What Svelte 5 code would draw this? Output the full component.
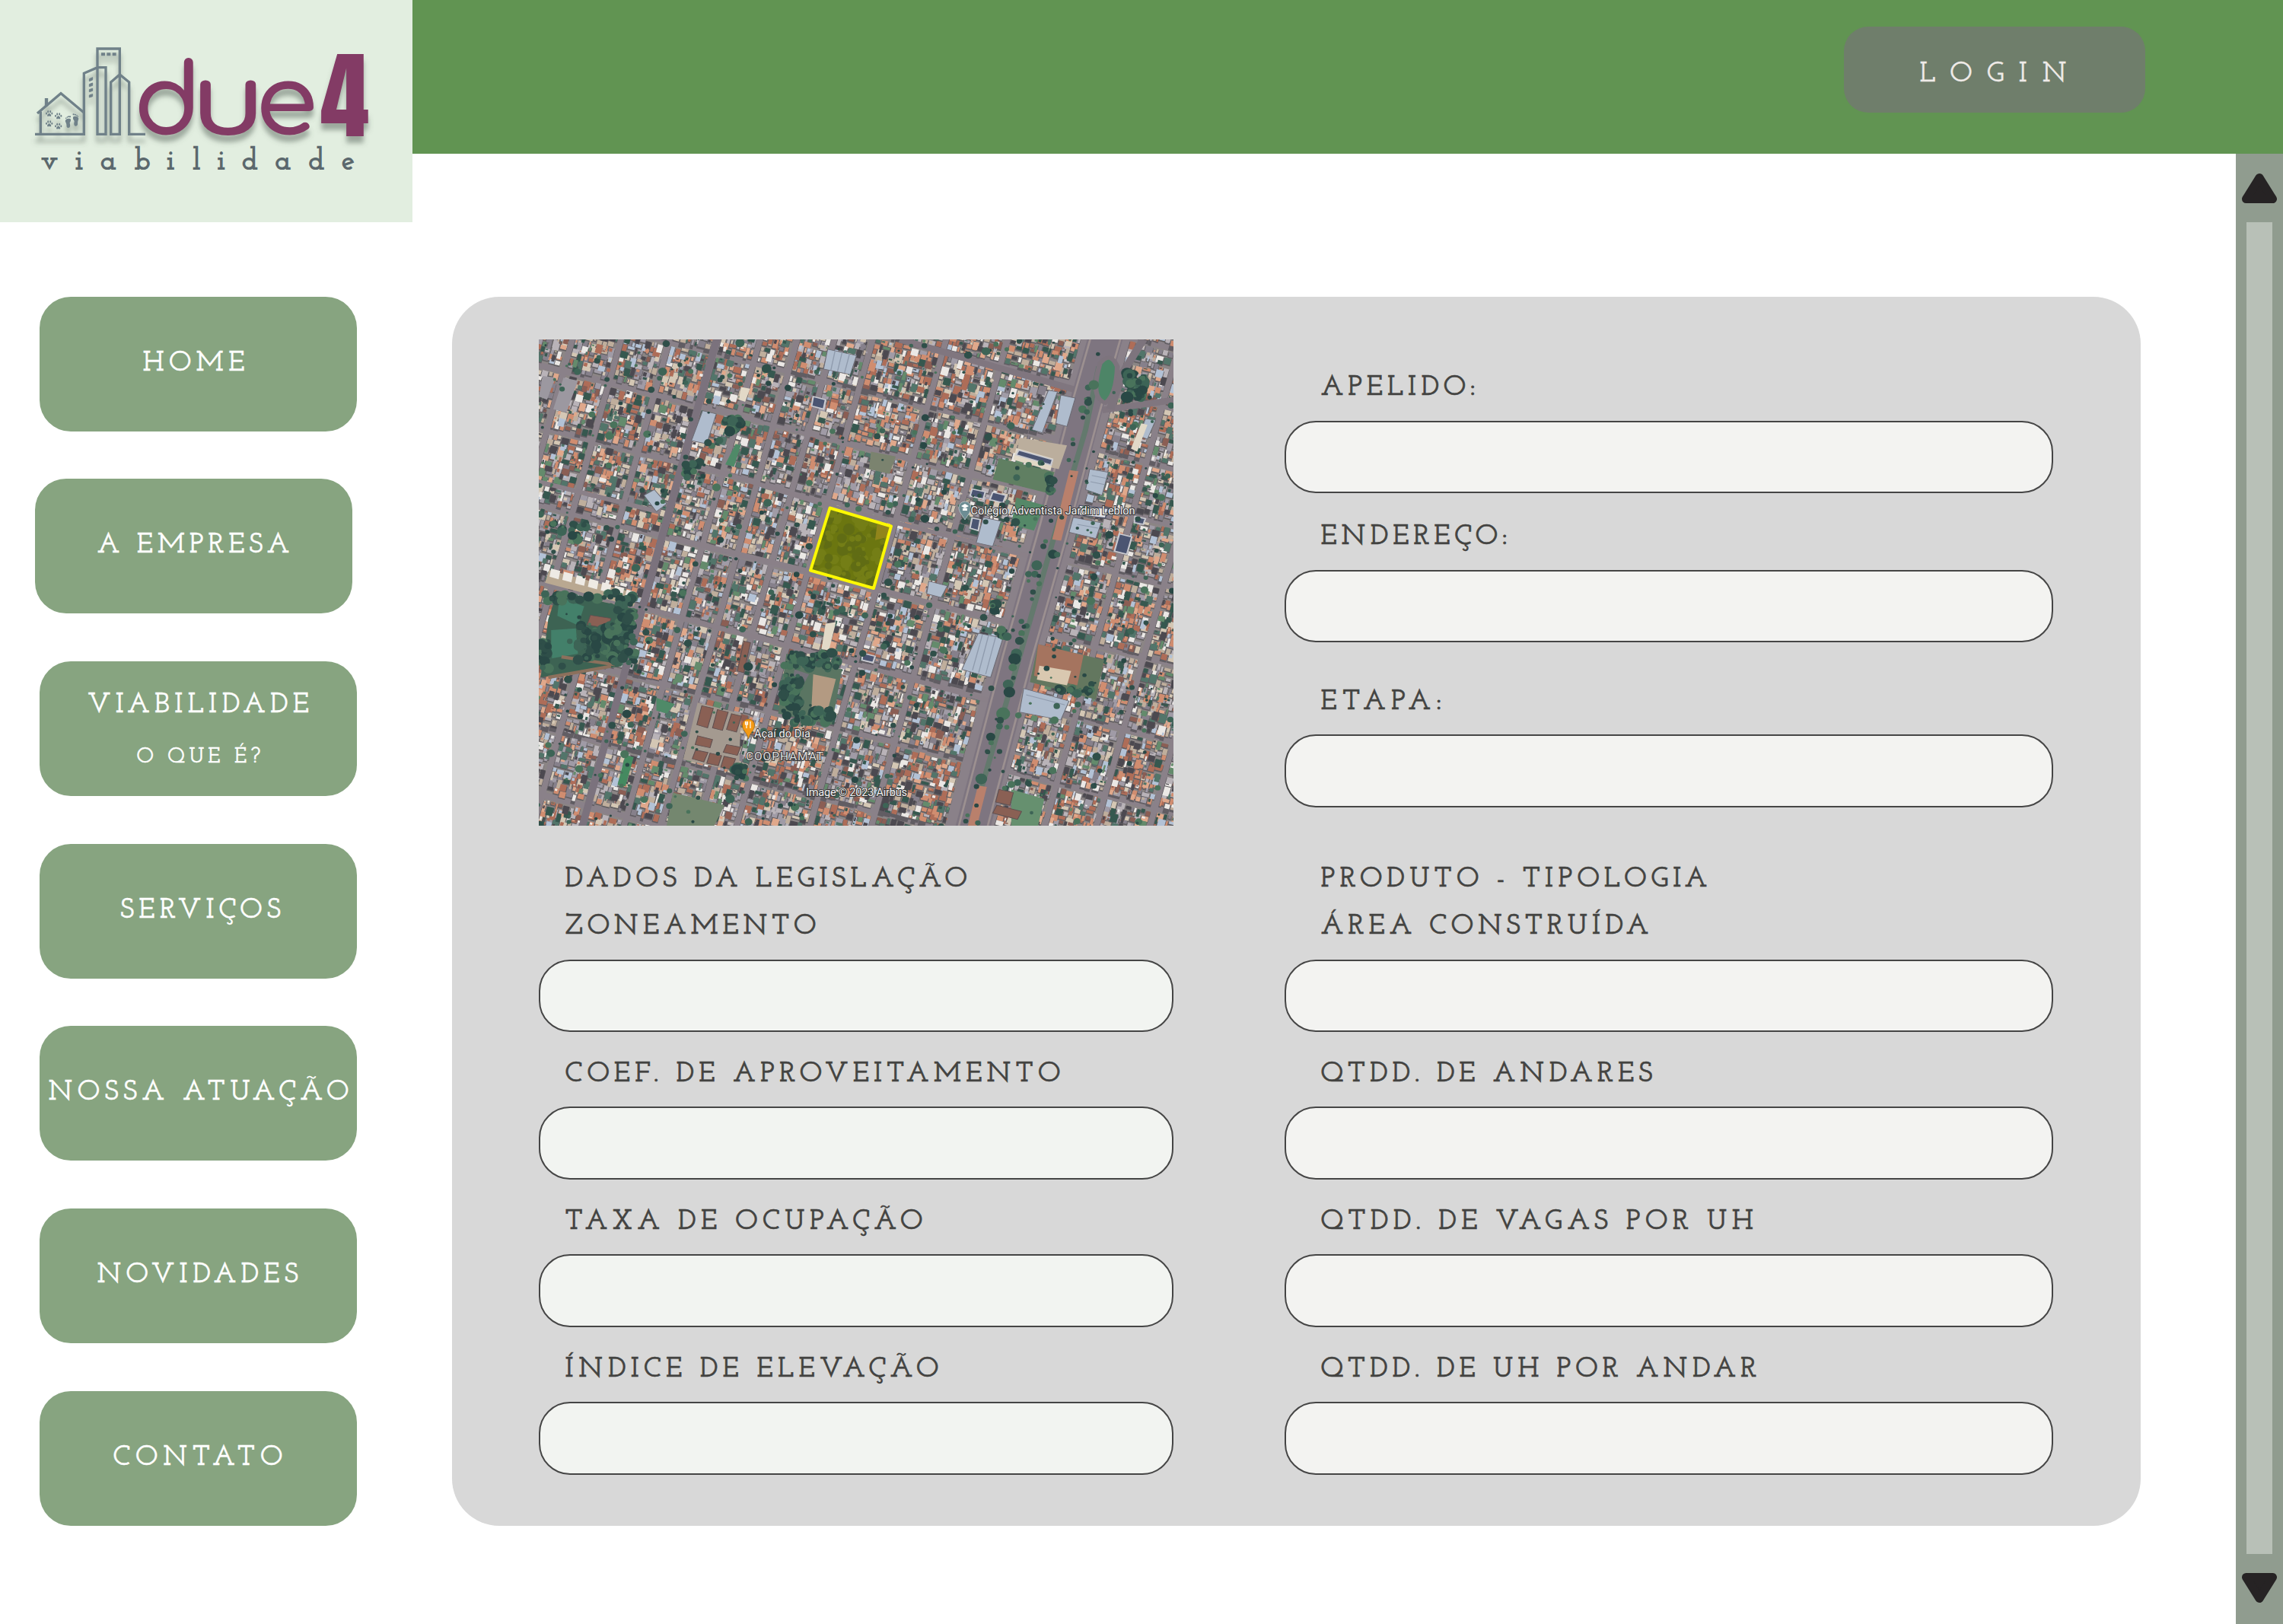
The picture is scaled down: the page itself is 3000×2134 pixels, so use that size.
<script>
  const nav = [
    { label: 'HOME', left: 135.5, width: 134 },
    { label: 'A EMPRESA', left: 81.5, width: 253, shifted: true },
    { label: 'VIABILIDADE', left: 63, width: 291, sub: 'O QUE É?', subLeft: 127.5, subWidth: 162.5 },
    { label: 'SERVIÇOS', left: 106, width: 211 },
    { label: 'NOSSA ATUAÇÃO', left: 11.5, width: 395 },
    { label: 'NOVIDADES', left: 75.5, width: 264.5 },
    { label: 'CONTATO', left: 96.5, width: 223 }
  ];
  const project = [
    { label: 'APELIDO:', width: 203 },
    { label: 'ENDEREÇO:', width: 245 },
    { label: 'ETAPA:', width: 158.5 }
  ];
  const legislation = [
    { label: 'ZONEAMENTO', width: 330 },
    { label: 'COEF. DE APROVEITAMENTO', width: 651 },
    { label: 'TAXA DE OCUPAÇÃO', width: 470 },
    { label: 'ÍNDICE DE ELEVAÇÃO', width: 491 }
  ];
  const product = [
    { label: 'ÁREA CONSTRUÍDA', width: 431 },
    { label: 'QTDD. DE ANDARES', width: 436 },
    { label: 'QTDD. DE VAGAS POR UH', width: 568.5 },
    { label: 'QTDD. DE UH POR ANDAR', width: 573 }
  ];

  // Tracks a label out so that its letters span the given width.
  function track(node, width) {
    const natural = node.getBoundingClientRect().width;
    const gaps = node.textContent.length - 1;
    node.style.letterSpacing = `${(width - natural) / gaps}px`;
  }

  // Seeded generator, so the aerial view is the same on every load.
  let seed = 20234;
  function rnd() {
    seed = (seed + 0x6d2b79f5) | 0;
    let t = Math.imul(seed ^ (seed >>> 15), 1 | seed);
    t = (t + Math.imul(t ^ (t >>> 7), 61 | t)) ^ t;
    return ((t ^ (t >>> 14)) >>> 0) / 4294967296;
  }
  const f = (n) => n.toFixed(1);
  // Street coordinates (s across the avenues, t across the cross streets) to the picture's.
  function at(s, t) {
    const x = (s - 0.214 * t) / 1.0706;
    return [x, t + 0.33 * x];
  }
  function quad(s0, t0, s1, t1) {
    return 'M' + [at(s0, t0), at(s1, t0), at(s1, t1), at(s0, t1)].map((p) => f(p[0]) + ' ' + f(p[1])).join('L') + 'Z';
  }
  const inside = (p) => p[0] > -20 && p[0] < 1590 && p[1] > -20 && p[1] < 1590;

  const avenues = [-20, 100, 218, 336, 453, 555, 645, 735, 828, 1006, 1155, 1340, 1445, 1575, 1700, 1830, 1960];
  const streets = [-560, -470, -280, -90, 90, 285, 531, 775, 1000, 1235, 1450, 1640];
  const roofs = [
    ['#a09ba6', 18], ['#b9b3b8', 15], ['#86808b', 12], ['#bfae9c', 12], ['#d4c7b4', 10],
    ['#ae6d58', 8], ['#d08d70', 9], ['#8b5e54', 5], ['#e0a88b', 5], ['#ebe8e5', 9],
    ['#b3c2d6', 6], ['#52756a', 8], ['#36584f', 8], ['#648b6c', 4], ['#4c4950', 9]
  ];
  const total = roofs.reduce((n, r) => n + r[1], 0);
  const paths = roofs.map(() => '');
  const pick = () => {
    let n = rnd() * total;
    let i = 0;
    while ((n -= roofs[i][1]) > 0) i++;
    return i;
  };
  let blocks = '';
  let shadows = '';
  for (let a = 0; a < avenues.length - 1; a++) {
    if (avenues[a] === 1340) continue;
    for (let b = 0; b < streets.length - 1; b++) {
      const [s0, s1, t0, t1] = [avenues[a] + 8, avenues[a + 1] - 8, streets[b] + 10, streets[b + 1] - 10];
      blocks += quad(s0, t0, s1, t1);
      const warm = rnd();
      for (let t = t0; t < t1 - 8; t += 17) {
        for (let s = s0; s < s1 - 6; ) {
          const w = 5 + rnd() * 15;
          const h = 8 + rnd() * 22;
          const p = at(s, t);
          if (inside(p)) {
            let i = pick();
            if (warm > 0.65 && i < 3 && rnd() < 0.5) i = 5 + Math.floor(rnd() * 2);
            const y = t + rnd() * 9;
            const e = Math.min(s + w, s1);
            shadows += quad(s - 1.5, y + 2, e, y + h + 4);
            paths[i] += quad(s, y, e - 1, Math.min(y + h, t1 + 4));
            if (rnd() < 0.5) paths[pick()] += quad(s + 1, y + 2, s + 2 + w * 0.4, y + h * 0.5);
          }
          s += w + rnd() * 3;
        }
      }
    }
  }
  const trees = [];
  for (let i = 0; i < 650; i++) trees.push([rnd() * 1560, rnd() * 1560, 2.5 + rnd() * rnd() * 10]);
  for (let i = 0; i < 60; i++) {
    const [x, y] = at(1388 + (rnd() - 0.5) * 20, -440 + i * 29 + rnd() * 20);
    if (y > 640 ? rnd() < 0.75 : rnd() < 0.2) trees.push([x, y, 5 + rnd() * rnd() * 16]);
  }
  function grove(x, y, w, h, n, r) {
    for (let i = 0; i < n * 1.8; i++) trees.push([x + rnd() * w, y + rnd() * h, r * (0.3 + rnd() * 0.8)]);
  }
  grove(20, 815, 225, 30, 20, 13);
  grove(110, 920, 120, 110, 46, 13);
  grove(190, 850, 60, 190, 26, 13);
  grove(15, 970, 24, 100, 12, 13);
  grove(606, 1005, 135, 50, 26, 13);
  grove(606, 1070, 46, 120, 24, 13);
  grove(625, 1185, 100, 45, 20, 13);
  grove(1435, 115, 46, 84, 26, 14);
  grove(465, 260, 40, 46, 12, 13);
  grove(485, 1365, 34, 44, 10, 13);
  grove(1180, 400, 80, 20, 2, 9);
  grove(1250, 445, 14, 60, 7, 11);
  grove(1275, 1110, 80, 26, 10, 11);
  grove(365, 400, 40, 60, 10, 11);
  grove(20, 590, 110, 60, 12, 11);
  grove(1112, 842, 18, 36, 7, 12);
  grove(1122, 932, 28, 26, 7, 11);
  const crowns = ['#2f4f49', '#3d6456', '#294845', '#49735b'];

  const canopy = [];
  for (let i = 0; i < 130; i++) {
    canopy.push([680 + rnd() * 185, 555 + rnd() * 240, 4 + rnd() * 11, rnd() < 0.5 ? '#55621c' : '#818a20']);
  }
  const paws = [[74, 297], [110, 307], [74, 337], [110, 347]];
  const letters = '42 177 277 410 538 640 737 835 965 1097 1228'.split(' ').map((n) => 39 + n / 3).join(' ');
</script>

{#snippet field(item, tone)}
  <label class="field {tone}">
    <span class="caption"><span use:track={item.width}>{item.label}</span></span>
    <input type="text" />
  </label>
{/snippet}

<div class="page">
  <aside class="side">
    <div class="logo">
      <svg viewBox="0 0 542 292" width="542" height="292">
        <defs>
          <filter id="drop" x="-10%" y="-10%" width="120%" height="130%">
            <feDropShadow dx="0" dy="9" stdDeviation="3.2" flood-color="#56635a" flood-opacity=".5" />
          </filter>
          <clipPath id="plot"><path d="M720 549L869 606 827 803 674 746Z" /></clipPath>
        </defs>
        <g filter="url(#drop)">
          <g transform="translate(40 50) scale(.33333)" fill="none" stroke="#6f8189" stroke-width="10">
            <path d="M18 379H211V139L264 116H297V379H264V42H352V379H317V174L352 144 389 174V379H453" />
            <path d="M40 379V290M27 297L120 218 211 294" />
            <path d="M63 237V268" stroke-width="13" />
            <path d="M279 64h15M301 64h15M323 64h15" stroke-width="12" />
            <path d="M232 161l13-6v10l-13 5zM232 182l13-5v10l-13 4zM232 203l13-4v9l-13 4zM232 225l13-4v9l-13 4z" stroke-width="3" fill="#6f8189" />
            <g fill="#6f8189" stroke="none">
              {#each paws as [x, y]}
                <g transform="translate({x} {y})">
                  <path d="M-8 10Q-9 4 0-1Q9 4 8 10Q4 13 0 10Q-4 13-8 10Z" />
                  <ellipse cx="-11" cy="0" rx="3" ry="4.5" /><ellipse cx="-4.5" cy="-7" rx="3" ry="5" />
                  <ellipse cx="4.5" cy="-7" rx="3" ry="5" /><ellipse cx="11" cy="0" rx="3" ry="4.5" />
                </g>
              {/each}
              <path d="M137 327Q141 315 157 318Q162 324 155 334Q158 346 155 352Q147 357 143 350Q143 338 137 327Z" />
              <path d="M190 318Q185 305 170 309Q164 316 173 327Q170 339 174 346Q182 350 186 342Q185 331 190 318Z" />
              <circle cx="140" cy="316" r="2.5" /><circle cx="145" cy="312" r="2.5" /><circle cx="150" cy="310" r="3" /><circle cx="156" cy="310" r="3.5" />
              <circle cx="170" cy="301" r="3.5" /><circle cx="177" cy="302" r="3" /><circle cx="183" cy="305" r="2.5" /><circle cx="187" cy="309" r="2.5" />
            </g>
          </g>
          <text class="word" x="175" y="176.600">d</text>
          <text class="word cup" transform="translate(250.500 176.600) scale(1.24 1)">u</text>
          <text class="word" transform="translate(335 176.600) scale(1.04 1)">e</text>
          <text class="four" transform="translate(421 179) scale(1.03 1)">4</text>
        </g>
        <text class="tagline" x={letters} y="223">viabilidade</text>
      </svg>
    </div>
    <nav class="menu">
      {#each nav as item}
        <a class="item" class:shifted={item.shifted} class:double={item.sub} href="#top">
          <span class="line" style="padding-left: {item.left}px"><span use:track={item.width}>{item.label}</span></span>
          {#if item.sub}
            <span class="line small" style="padding-left: {item.subLeft}px"><span use:track={item.subWidth}>{item.sub}</span></span>
          {/if}
        </a>
      {/each}
    </nav>
  </aside>

  <div class="body">
    <header class="top">
      <button class="login"><span use:track={193}>LOGIN</span></button>
    </header>
    <div class="content">
      <main class="panel">
        <section class="column left">
          <div class="map">
            <svg class="aerial" viewBox="15 14 1538 1541" preserveAspectRatio="none" width="834" height="639">
              <rect width="1600" height="1600" fill="#8a8189" />
              <path d={blocks} fill="#8b8585" />
              <path d={shadows} fill="#4b494f" opacity=".65" />
              {#each roofs as [color], i}
                <path d={paths[i]} fill={color} />
              {/each}
              <!-- wide roads -->
              <path d="M449 0L330 560 118 1570" stroke="#7b727d" stroke-width="18" fill="none" />
              <path d="M0 460L310 562M370 400L720 542 1215 705M330 640L670 748 1190 925M270 865L620 985 1110 1160" stroke="#8a8088" stroke-width="14" fill="none" />
              <path d="M890 14L1345 185M1380 238L1560 205" stroke="#80767f" stroke-width="20" fill="none" />
              <path d="M1390 0L1340 230 1265 600 1175 1020 1065 1570" stroke="#7e7580" stroke-width="84" fill="none" />
              <path d="M1425 10L1375 240 1300 610 1210 1025 1100 1570M1352 10L1304 230 1230 600 1140 1015 1032 1560" stroke="#9c9090" stroke-width="5" fill="none" />
              <path d="M1372 100L1340 300 1268 620 1180 1020 1060 1560" stroke="#63796d" stroke-width="13" fill="none" />
              <path d="M1312 430L1270 650M1090 1430L1065 1560" stroke="#b9806c" stroke-width="22" fill="none" />
              <path d="M1388 215Q1350 200 1375 90Q1400 50 1417 100Q1415 190 1388 215Z" fill="#4d8567" stroke="#7d747d" stroke-width="12" />
              <path d="M1480 14L1430 120 1400 235" stroke="#7d747d" stroke-width="20" fill="none" />
              <!-- green areas -->
              <path d="M60 815L255 870 215 1050 20 1085 38 900Z" fill="#3d6353" />
              <path d="M65 830L125 860 110 920 60 890ZM45 935L105 930 110 1010 45 1025Z" fill="#43806a" />
              <path d="M70 1020L200 1045M38 1085L190 1050" stroke="#8c705c" stroke-width="10" />
              <path d="M1130 390L1265 435 1245 500 1115 458Z" fill="#607f62" />
              <path d="M1172 515L1240 540 1215 620 1160 600Z" fill="#558868" />
              <path d="M820 370L880 385 865 440 815 425Z" fill="#7b836f" />
              <path d="M615 1010L750 1060 725 1235 595 1200Z" fill="#5a7562" />
              <path d="M680 1075L735 1090 715 1190 675 1200Z" fill="#b39a82" />
              <path d="M635 1060L670 1075 655 1110 628 1100Z" fill="#74727a" />
              <path d="M1225 980L1385 1030 1365 1155 1205 1100Z" fill="#63775f" />
              <path d="M1225 980L1335 1015 1320 1110 1215 1080Z" fill="#a5745f" />
              <path d="M1228 1048L1305 1065 1295 1110 1222 1092Z" fill="#d9c8b0" />
              <path d="M1160 1440L1240 1470 1225 1555 1160 1555Z" fill="#66906f" />
              <path d="M340 1450L465 1490 440 1555 325 1555Z" fill="#74876f" />
              <path d="M225 1330L245 1338 225 1430 206 1424Z" fill="#458a60" />
              <path d="M492 345L505 350 488 418 467 410ZM300 1150L345 1170 325 1200 300 1190Z" fill="#4f8a68" />
              <!-- long white apartments -->
              <path d="M40 745L255 820 245 860 30 785Z" fill="#b9a891" />
              <path d="M45 740l22 8-4 26-22-8zM76 750l22 8-4 26-22-8zM107 761l22 8-4 26-22-8zM138 772l22 8-4 26-22-8zM169 783l22 8-4 26-22-8zM200 794l22 8-4 26-22-8zM228 806l20 8-4 22-20-8z" fill="#eeeae4" />
              <!-- warehouses and larger roofs -->
              <g fill="#9c98a0"><path d="M75 135L110 145 82 245 50 235ZM25 130L55 135 35 205 15 195Z" /></g>
              <g fill="#afbccd" stroke="#6c6b74" stroke-width="2">
                <path d="M715 45L785 65 770 125 705 108ZM412 240L445 250 422 345 385 335ZM1080 945L1140 960 1110 1085 1040 1060Z" />
                <path d="M1092 578L1135 590 1115 670 1075 658ZM1250 175L1272 180 1235 310 1210 300ZM1280 190L1315 200 1295 290 1268 280Z" />
                <path d="M1350 425L1395 435 1380 508 1340 490ZM1310 578L1378 595 1365 645 1300 625ZM1190 1120L1300 1160 1280 1220 1180 1195Z" />
                <path d="M270 508L295 490 325 535 300 560ZM1485 265L1510 270 1490 330 1470 320ZM960 780L1005 795 990 832 955 820Z" />
              </g>
              <path d="M1090 950l-24 112M1105 952l-24 118M1122 957l-24 118M733 50l-10 60M750 55l-11 60M768 60l-12 60M1320 600l50 12M1196 1140l94 32M1355 445l34 9M1352 465l34 9" stroke="#8f9bad" stroke-width="2.5" fill="none" />
              <path d="M1180 325L1295 350 1275 425 1170 395Z" fill="#bbae9d" />
              <path d="M1172 358L1262 392 1255 430 1165 395ZM710 915L735 910 718 1000 700 995ZM1475 280L1490 285 1465 370 1450 360ZM505 165L527 170 515 212 500 205Z" fill="#e2d9c7" />
              <path d="M1178 365L1260 395 1256 412 1172 380ZM1065 488L1097 497 1092 520 1060 510ZM1115 498L1147 508 1140 532 1108 522ZM1422 630L1452 640 1440 695 1410 685ZM1460 575L1485 582 1480 600 1458 595ZM800 1008L830 1018 825 1038 798 1030ZM680 195L710 205 705 235 676 225ZM1065 580L1085 585 1080 620 1060 612Z" fill="#4b5572" stroke="#c9cad0" stroke-width="4" />
              <path d="M1325 540L1395 550 1388 580 1320 570Z" fill="#e3e3e6" stroke="#52586d" stroke-width="3" />
              <!-- housing complex -->
              <path d="M400 1165L505 1200 500 1385 365 1345Z" fill="#a49a90" />
              <g fill="#8a6054" stroke="#5e4f50" stroke-width="2">
                <path d="M410 1175l28 8-14 62-26-10zM448 1187l26 8-14 58-24-8zM482 1200l24 8-12 50-24-8zM400 1270l36 12-6 26-36-10zM470 1298l34 8-8 26-34-10zM395 1315l30 8-10 30-28-10zM430 1325l28 8-8 32-28-8zM464 1335l28 8-10 34-26-8z" />
                <path d="M512 970l16 5-16 95-16-5zM1130 1440l35 10-8 40-35-10zM1125 1490l60 20-10 25-60-20zM140 888l50 10-8 32-50-12z" />
              </g>
              {#each trees as [x, y, r], i}
                <ellipse cx={f(x)} cy={f(y)} rx={f(r)} ry={f(r * 1.2)} fill={crowns[i % 4]} />
              {/each}
              <path d="M720 549L869 606 827 803 674 746Z" fill="#6b7610" />
              <g clip-path="url(#plot)" opacity=".45">
                {#each canopy as [x, y, r, color]}
                  <ellipse cx={f(x)} cy={f(y)} rx={f(r)} ry={f(r * 1.3)} fill={color} />
                {/each}
                <path d="M835 600L870 610 862 640 830 650Z" fill="#c09a2a" />
              </g>
            </svg>
            <svg class="marks" viewBox="0 0 834 639" width="834" height="639">
              <path d="M382.5 221.5L463 245.5 440 327 357 303.5Z" fill="none" stroke="#fcf803" stroke-width="4" stroke-linejoin="round" />
              <path d="M560 237c-5-8-8-11-8-16a8 8 0 0 1 16 0c0 5-3 8-8 16z" fill="#6d8d94" stroke="#c9d2d4" stroke-width=".7" />
              <path d="M555 219l5-3 5 3-5 3zM557 222h6v3h-6z" fill="#fff" />
              <path d="M275.5 525c-2-9-8-11-8-18a8 8 0 0 1 16 0c0 7-6 9-8 18z" fill="#f59a14" stroke="#9b6a20" stroke-width=".7" />
              <path d="M273 502v9M278 502v9M271.5 502v4h3v-4" fill="none" stroke="#fff" stroke-width="1.2" />
              <text x="567.5" y="230" textLength="216">Colégio Adventista Jardim Leblon</text>
              <text x="283" y="523" textLength="74">Açaí do Dia</text>
              <text class="area" x="272" y="553" textLength="102">COOPHAMAT</text>
              <text x="351" y="600" textLength="133">Image © 2023 Airbus</text>
            </svg>
          </div>
          <h2 class="caption heading"><span use:track={528.5}>DADOS DA LEGISLAÇÃO</span></h2>
          {#each legislation as item}
            {@render field(item, 'cool')}
          {/each}
        </section>
        <section class="column right">
          <div class="project">
            {#each project as item}
              {@render field(item, 'warm')}
            {/each}
          </div>
          <h2 class="caption heading"><span use:track={508}>PRODUTO - TIPOLOGIA</span></h2>
          {#each product as item}
            {@render field(item, 'warm')}
          {/each}
        </section>
      </main>
      <div class="scrollbar">
        <svg width="50" height="45" viewBox="0 0 50 45"><path d="M25 8.5L42.5 36.5H7.5Z" /></svg>
        <div class="thumb"></div>
        <svg width="50" height="45" viewBox="0 0 50 45"><path d="M25 36.5L42.5 8.5H7.5Z" /></svg>
      </div>
    </div>
  </div>
</div>

<style>
  :global(body) {
    margin: 0;
    background: #fff;
  }
  .page {
    display: flex;
    width: 3000px;
    height: 2134px;
    overflow: hidden;
    background: #fff;
    font-family: 'Josefin Slab', 'DejaVu Serif', serif;
    font-weight: 600;
    font-size: 37.4px;
    color: #434341;
  }
  .side {
    width: 542px;
    flex: none;
  }
  .logo {
    height: 292px;
    background: #e2eee0;
  }
  .logo svg {
    display: block;
  }
  .word {
    font-family: Comfortaa, 'Varela Round', sans-serif;
    font-weight: 560;
    font-size: 128px;
    fill: #833a65;
  }
  .cup {
    font-family: Quicksand, Comfortaa, sans-serif;
    font-weight: 480;
    font-size: 138px;
  }
  .four {
    font-family: Anton, Oswald, sans-serif;
    font-weight: 400;
    font-size: 125.6px;
    fill: #833a65;
  }
  .tagline {
    font-size: 41px;
    font-weight: 700;
    fill: #5b686d;
  }
  .menu {
    display: flex;
    flex-direction: column;
    gap: 62.7px;
    padding: 97.5px 0 0 52px;
  }
  .item {
    box-sizing: border-box;
    width: 417px;
    height: 177px;
    padding-top: 54px;
    border-radius: 41px;
    background: #87a480;
    color: #fff;
    text-decoration: none;
    -webkit-text-stroke: 0.4px #fff;
  }
  .item.shifted {
    margin-left: -6px;
  }
  .item.double {
    padding-top: 24px;
  }
  .line {
    display: block;
    line-height: 68.8px;
    height: 62px;
    white-space: nowrap;
  }
  .small {
    font-size: 28.4px;
    line-height: 80.6px;
  }
  .body {
    flex: 1;
    display: flex;
    flex-direction: column;
  }
  .top {
    box-sizing: border-box;
    height: 202px;
    padding: 35px 181px 0 0;
    display: flex;
    justify-content: flex-end;
    background: #619452;
  }
  .login {
    box-sizing: border-box;
    width: 396px;
    height: 113px;
    padding: 12px 0 0 99.5px;
    border: 0;
    border-radius: 32px;
    background: #6f7e6b;
    color: #efebe8;
    font: inherit;
    line-height: 62px;
    text-align: left;
    white-space: nowrap;
    -webkit-text-stroke: 0.3px #efebe8;
  }
  .content {
    flex: 1;
    display: flex;
    justify-content: space-between;
  }
  .panel {
    box-sizing: border-box;
    width: 2218.5px;
    height: 1614.5px;
    margin: 188px 0 0 52px;
    padding: 56px 114px 0;
    border-radius: 62px;
    background: #d8d8d8;
    display: grid;
    grid-template-columns: 833.5px 1010px;
    gap: 146px;
  }
  .map {
    position: relative;
    height: 639px;
    margin-bottom: 36.3px;
    overflow: hidden;
  }
  .aerial {
    display: block;
    filter: blur(0.6px);
  }
  .marks {
    position: absolute;
    inset: 0;
    font-family: Roboto, 'Liberation Sans', sans-serif;
    font-weight: 400;
    font-size: 14.6px;
  }
  .marks text {
    fill: #f2f2f2;
    stroke: #333;
    stroke-width: 2px;
    paint-order: stroke;
  }
  .marks .area {
    font-size: 15.5px;
    fill: #dedede;
  }
  .caption {
    display: block;
    height: 62px;
    line-height: 70px;
    white-space: nowrap;
    -webkit-text-stroke: 0.6px #434341;
  }
  .heading {
    margin: 0;
    font-size: inherit;
    font-weight: inherit;
  }
  .left .caption {
    padding-left: 34.5px;
  }
  .right .caption {
    padding-left: 48px;
  }
  .field {
    display: block;
    height: 193.9px;
  }
  .field input {
    box-sizing: border-box;
    display: block;
    width: 100%;
    height: 95.5px;
    margin: 15.3px 0 0;
    padding: 0 36px;
    border: 2px solid #454545;
    border-radius: 41px;
    font: inherit;
    color: inherit;
  }
  .cool input {
    background: #f2f4f1;
  }
  .warm input {
    background: #f3f3f1;
  }
  .project {
    box-sizing: border-box;
    height: 675.3px;
    padding-top: 29.3px;
  }
  .project .field {
    height: 196px;
  }
  .project .field:nth-child(2) {
    height: 216.7px;
  }
  .scrollbar {
    box-sizing: border-box;
    width: 62.4px;
    padding: 23px 0 25px;
    display: flex;
    flex-direction: column;
    align-items: center;
    background: #909c8f;
  }
  .scrollbar svg {
    flex: none;
  }
  .scrollbar path {
    fill: #262324;
    stroke: #262324;
    stroke-width: 11px;
    stroke-linejoin: round;
  }
  .thumb {
    flex: 1;
    width: 33.5px;
    margin: 22px 0;
    background: #b8c0b7;
  }
</style>
